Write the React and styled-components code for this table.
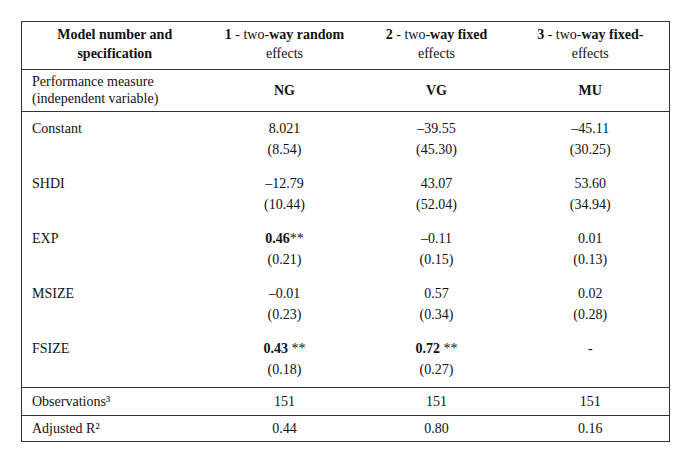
import React from "react";
import styled, { createGlobalStyle } from "styled-components";

const GlobalStyle = createGlobalStyle`
  body {
    margin: 0;
    background: #ffffff;
    font-family: "Liberation Serif", "Times New Roman", serif;
    color: #111;
  }
`;

const Page = styled.div`
  padding: 21px 0 0 21px;
`;

const Table = styled.table`
  width: 648px;
  table-layout: fixed;
  border-collapse: collapse;
  border: 1px solid #333;
  font-size: 14px;
`;

const HeadCell = styled.th`
  font-weight: bold;
  text-align: center;
  line-height: 19px;
  padding: 3px 6px 6px;
  border-bottom: 1px solid #333;
  vertical-align: middle;
`;

const Light = styled.span`
  font-weight: normal;
`;

const MeasureRow = styled.tr`
  border-bottom: 1px solid #333;
  height: 42px;
`;

const LabelCell = styled.td`
  text-align: left;
  padding: ${(p) => p.$pad || "0 0 0 10px"};
  line-height: ${(p) => p.$lh || "21px"};
  vertical-align: ${(p) => p.$valign || "top"};
`;

const ValueCell = styled.td`
  text-align: center;
  padding: ${(p) => p.$pad || "0"};
  line-height: ${(p) => p.$lh || "21px"};
  font-weight: ${(p) => (p.$bold ? "bold" : "normal")};
  vertical-align: ${(p) => p.$valign || "top"};
`;

const BodyRow = styled.tr`
  & > td {
    padding-top: 6px;
    padding-bottom: 7px;
  }
`;

const Line = styled.div`
  height: 21px;
`;

const Stars = styled.span`
  font-weight: normal;
`;

const SummaryRow = styled.tr`
  border-top: 1px solid #333;
  border-bottom: 1px solid #333;
  height: ${(p) => p.$h}px;
`;

const rows = [
  { label: "Constant", cells: [["8.021", "(8.54)"], ["–39.55", "(45.30)"], ["–45.11", "(30.25)"]] },
  { label: "SHDI", cells: [["–12.79", "(10.44)"], ["43.07", "(52.04)"], ["53.60", "(34.94)"]] },
  { label: "EXP", cells: [[{ b: "0.46", s: "**" }, "(0.21)"], ["–0.11", "(0.15)"], ["0.01", "(0.13)"]] },
  { label: "MSIZE", cells: [["–0.01", "(0.23)"], ["0.57", "(0.34)"], ["0.02", "(0.28)"]] },
  { label: "FSIZE", cells: [[{ b: "0.43 ", s: "**" }, "(0.18)"], [{ b: "0.72 ", s: "**" }, "(0.27)"], ["-", ""]] },
];

const renderValue = (v) =>
  typeof v === "string" ? (
    v
  ) : (
    <b>
      {v.b}
      <Stars>{v.s}</Stars>
    </b>
  );

const App = () => {
  return (
    <Page>
      <GlobalStyle />
      <Table>
        <colgroup>
          <col style={{ width: 186 }} />
          <col style={{ width: 154 }} />
          <col style={{ width: 150 }} />
          <col style={{ width: 158 }} />
        </colgroup>
        <thead>
          <tr>
            <HeadCell>
              Model number and
              <br />
              specification
            </HeadCell>
            <HeadCell>
              1 <Light>- two-</Light>way random
              <br />
              <Light>effects</Light>
            </HeadCell>
            <HeadCell>
              2 <Light>- two-</Light>way fixed
              <br />
              <Light>effects</Light>
            </HeadCell>
            <HeadCell>
              3 <Light>- two-</Light>way fixed-
              <br />
              <Light>effects</Light>
            </HeadCell>
          </tr>
        </thead>
        <tbody>
          <MeasureRow>
            <LabelCell $lh="17px" $valign="middle" $pad="0 0 2px 10px">
              Performance measure
              <br />
              (independent variable)
            </LabelCell>
            <ValueCell $bold $valign="middle">NG</ValueCell>
            <ValueCell $bold $valign="middle">VG</ValueCell>
            <ValueCell $bold $valign="middle">MU</ValueCell>
          </MeasureRow>
          {rows.map((row) => (
            <BodyRow key={row.label}>
              <LabelCell>{row.label}</LabelCell>
              {row.cells.map((c, i) => (
                <ValueCell key={i}>
                  <Line>{renderValue(c[0])}</Line>
                  <Line>{c[1]}</Line>
                </ValueCell>
              ))}
            </BodyRow>
          ))}
          <SummaryRow $h={28}>
            <LabelCell $valign="middle">Observations³</LabelCell>
            <ValueCell $valign="middle">151</ValueCell>
            <ValueCell $valign="middle">151</ValueCell>
            <ValueCell $valign="middle">151</ValueCell>
          </SummaryRow>
          <SummaryRow $h={26}>
            <LabelCell $valign="middle">Adjusted R²</LabelCell>
            <ValueCell $valign="middle">0.44</ValueCell>
            <ValueCell $valign="middle">0.80</ValueCell>
            <ValueCell $valign="middle">0.16</ValueCell>
          </SummaryRow>
        </tbody>
      </Table>
    </Page>
  );
};

export default App;
